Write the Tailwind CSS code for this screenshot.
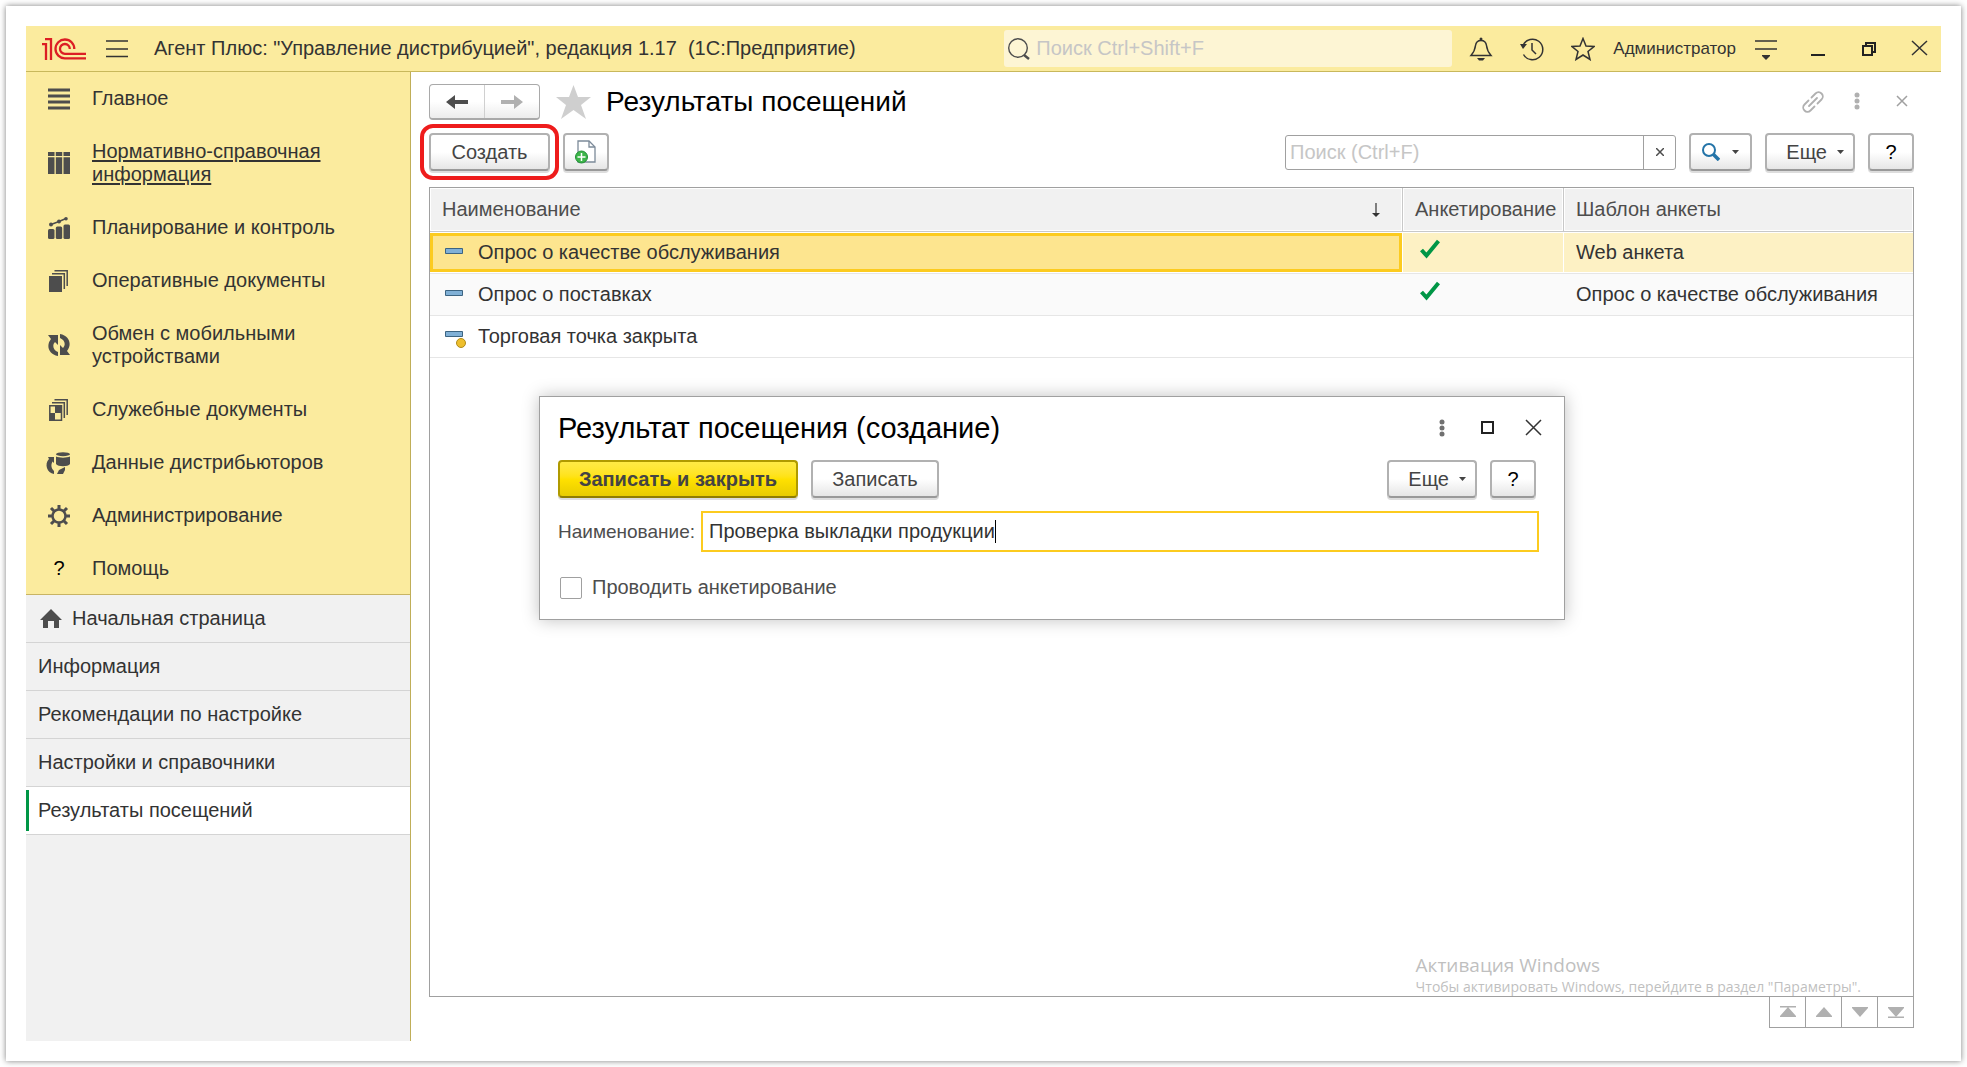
<!DOCTYPE html>
<html lang="ru">
<head>
  <meta charset="UTF-8" />
  <meta name="viewport" content="width=device-width, initial-scale=1.0"/>
  <title>Результаты посещений</title>
  <script src="https://cdn.jsdelivr.net/npm/@tailwindcss/browser@4"></script>
</head>
<body class="flex min-h-screen bg-white p-[6px] font-['Liberation_Sans',Arial,sans-serif] text-[20px] leading-[23px] text-[#333333]">

<div class="flex flex-1 flex-col bg-white p-5 shadow-[0_0_6px_rgba(0,0,0,0.5)]">

  <header class="flex h-[46px] items-center border-b border-[#c8b85c] bg-[#fbeb9e]">
    <svg class="ml-4 h-[22px] w-11 shrink-0" viewBox="0 0 44 22" fill="none" stroke="#dc1e24" stroke-width="2.300">
      <path d="M0 6.200h4V22M3 1.200h6V22"/>
      <path d="M32.300 11A9.400 9.400 0 1 0 23 20.300H44M27.800 11A4.900 4.900 0 1 0 23 15.800H44"/>
    </svg>
    <button class="ml-5 shrink-0" aria-label="Меню">
      <svg class="h-[22px] w-[22px]" viewBox="0 0 22 22" stroke="#333" stroke-width="1.500"><path d="M0 3h22M0 11h22M0 18.500h22"/></svg>
    </button>
    <h1 class="ml-[26px] flex-1 whitespace-pre">Агент Плюс: "Управление дистрибуцией", редакция 1.17  (1С:Предприятие)</h1>
    <label class="flex h-[37px] w-[448px] items-center rounded-[3px] bg-[#fdf5d4] pl-1">
      <svg class="h-[22px] w-[22px]" viewBox="0 0 22 22" fill="none" stroke="#4d4d4d"><circle cx="10" cy="10" r="9.300" stroke-width="1.400"/><path d="M16 17l5 4" stroke-width="2.500"/></svg>
      <input type="text" placeholder="Поиск Ctrl+Shift+F" aria-label="Поиск" class="ml-1.5 min-w-0 flex-1 bg-transparent outline-none placeholder:text-[#c6c6c6]">
    </label>
    <div class="ml-[7px] flex items-center gap-[7px] text-[17px]">
      <button class="flex w-11 justify-center" aria-label="Уведомления">
        <svg class="h-6 w-6" viewBox="0 0 24 24" fill="none" stroke="#333" stroke-width="1.500"><path d="M2 18.500C5 15 6 13 6.500 8.500 7 5 9 3.500 12 3.500s5 1.500 5.500 5C18 13 19 15 22 18.500Z"/><path d="M8 21h8l-2 2.500h-4z" fill="#333" stroke="none"/><circle cx="12" cy="2" r="1.500" fill="#333" stroke="none"/></svg>
      </button>
      <button class="flex w-11 justify-center" aria-label="История">
        <svg class="h-6 w-6" viewBox="0 0 24 24" fill="none" stroke="#333" stroke-width="1.500"><path d="M3.200 8A10.300 10.300 0 1 1 3.500 17.500"/><path d="M12 6v7l4 4"/><path d="M0 7h7l-4 5z" fill="#333" stroke="none"/></svg>
      </button>
      <button class="flex w-11 justify-center" aria-label="Избранное">
        <svg class="h-6 w-6" viewBox="0 0 24 24" fill="none" stroke="#333" stroke-width="1.500"><path d="M12 1.500l3 7.500 8 .5-6 5 2 8-7-4.500-7 4.500 2-8-6-5 8-.5z"/></svg>
      </button>
      <a href="#" class="px-px">Администратор</a>
      <button class="flex w-11 justify-center" aria-label="Настройки окна">
        <svg class="h-6 w-6" viewBox="0 0 24 24"><path d="M1 4h22M1 12h22" stroke="#333" stroke-width="1.500"/><path d="M8 18h8v1l-4 4-4-4z" fill="#333"/></svg>
      </button>
      <button class="flex w-11 justify-center" aria-label="Свернуть">
        <svg class="h-6 w-6" viewBox="0 0 24 24"><path d="M6 18h14" stroke="#222" stroke-width="2"/></svg>
      </button>
      <button class="flex w-11 justify-center" aria-label="Восстановить">
        <svg class="h-6 w-6" viewBox="0 0 24 24" fill="none" stroke="#222" stroke-width="2"><path d="M7 9h9v9H7zM10 9V6h9v9h-3"/></svg>
      </button>
      <button class="flex w-11 justify-center" aria-label="Закрыть">
        <svg class="h-6 w-6" viewBox="0 0 24 24" stroke="#333" stroke-width="1.500"><path d="M5 4l15 14M20 4L5 18"/></svg>
      </button>
    </div>
  </header>

  <div class="flex flex-1">

    <aside class="flex w-[385px] shrink-0 flex-col border-r border-[#c0ae58] bg-[#f1f1f1]">
      <nav class="border-b border-[#c8b464] bg-[#fbeb9e]">
        <a href="#" class="flex items-center py-[15px] pl-[22px]">
          <svg class="mr-[22px] h-[22px] w-[22px] shrink-0" viewBox="0 0 22 22"><path d="M0 2h22M0 8h22M0 14h22M0 20h22" stroke="#4d4d4d" stroke-width="3"/></svg>
          Главное
        </a>
        <a href="#" class="flex items-center py-[15px] pl-[22px] underline underline-offset-2">
          <svg class="mr-[22px] h-[22px] w-[22px] shrink-0" viewBox="0 0 22 22" fill="#4d4d4d"><path d="M0 0h6.500v4H0zM7.800 0h6.400v4H7.800zM15.500 0H22v4h-6.500zM0 5.300h6.500V22H0zM7.800 5.300h6.400V22H7.800zM15.500 5.300H22V22h-6.500z"/></svg>
          <span>Нормативно-справочная<br>информация</span>
        </a>
        <a href="#" class="flex items-center py-[15px] pl-[22px]">
          <svg class="mr-[22px] h-[22px] w-[22px] shrink-0" viewBox="0 0 22 22" fill="#4d4d4d"><rect y="12" width="6.500" height="10" rx="1.500"/><rect x="7.800" y="9.500" width="6.400" height="12.500" rx="1.500"/><rect x="15.500" y="7.500" width="6.500" height="14.500" rx="1.500"/><path d="M3 7.500l8-3 7-3" stroke="#4d4d4d" stroke-width="1.500" fill="none"/><circle cx="3" cy="7.500" r="2"/><circle cx="11" cy="4.500" r="2"/><circle cx="18" cy="1.800" r="1.800"/></svg>
          Планирование и контроль
        </a>
        <a href="#" class="flex items-center py-[15px] pl-[22px]">
          <svg class="mr-[22px] h-[22px] w-[22px] shrink-0" viewBox="0 0 22 22"><path d="M1 6h13v16H1z" fill="#4d4d4d"/><path d="M4 3.800h12.300V19M6.500.8h12.700V16" fill="none" stroke="#4d4d4d" stroke-width="1.500"/></svg>
          Оперативные документы
        </a>
        <a href="#" class="flex items-center py-[15px] pl-[22px]">
          <svg class="mr-[22px] h-[22px] w-[22px] shrink-0" viewBox="0 0 22 22" fill="#4d4d4d"><path d="M0 1h10v10L7 8c-3 3-2 8 3 10v4C0 20-2 11 3 5zM22 21H12V11l3 3c3-3 2-8-3-10V0c10 2 12 11 7 17z"/></svg>
          <span>Обмен с мобильными<br>устройствами</span>
        </a>
        <a href="#" class="flex items-center py-[15px] pl-[22px]">
          <svg class="mr-[22px] h-[22px] w-[22px] shrink-0" viewBox="0 0 22 22" fill="none" stroke="#4d4d4d" stroke-width="1.500"><path d="M1.800 6.800h11.700v14.400H1.800z"/><path d="M7 7h6v7H7zM2 14h5v7H2z" fill="#4d4d4d" stroke="none"/><path d="M4 3.800h12.300V19M6.500.8h12.700V16"/></svg>
          Служебные документы
        </a>
        <a href="#" class="flex items-center py-[15px] pl-[22px]">
          <svg class="mr-[22px] h-[22px] w-[22px] shrink-0 overflow-visible" viewBox="0 0 22 22" fill="#4d4d4d"><ellipse cx="15" cy="2.200" rx="7" ry="2"/><path d="M8 4.500c3 1.500 11 1.500 14 0V12c-2 3-12 3-14 0zM0 5h6v6L4.500 9.500c-2 4-1 7 1.500 9.500v3C-1 21-4 12 1 7zM17 15v3l-2 4H9l2-4z"/></svg>
          Данные дистрибьюторов
        </a>
        <a href="#" class="flex items-center py-[15px] pl-[22px]">
          <svg class="mr-[22px] h-[22px] w-[22px] shrink-0" viewBox="0 0 22 22" fill="none" stroke="#4d4d4d"><circle cx="11" cy="11" r="6.500" stroke-width="2.500"/><path d="M11 0v4M11 18v4M0 11h4M18 11h4M3 3l3 3M16 16l3 3M3 19l3-3M16 6l3-3" stroke-width="3"/></svg>
          Администрирование
        </a>
        <a href="#" class="flex items-center pt-[15px] pb-[14px] pl-[22px]">
          <span class="mr-[22px] w-[22px] text-center text-black">?</span>
          Помощь
        </a>
      </nav>
      <nav>
        <a href="#" class="flex h-12 items-center border-b border-[#d4d4d4] pl-[14px]">
          <svg class="mr-[10px] h-5 w-[22px]" viewBox="0 0 22 20" fill="#4d4d4d"><path d="M11 0l11 11h-3v8h-5v-7H8v7H3v-8H0z"/></svg>
          Начальная страница
        </a>
        <a href="#" class="flex h-12 items-center border-b border-[#d4d4d4] pl-3">Информация</a>
        <a href="#" class="flex h-12 items-center border-b border-[#d4d4d4] pl-3">Рекомендации по настройке</a>
        <a href="#" class="flex h-12 items-center border-b border-[#d4d4d4] pl-3">Настройки и справочники</a>
        <a href="#" class="flex h-12 items-center border-b border-[#d4d4d4] bg-white">
          <span class="mr-[9px] h-[41px] w-[3px] bg-[#009646]"></span>Результаты посещений
        </a>
      </nav>
    </aside>

    <main class="relative flex min-w-0 flex-1 flex-col pt-3 pr-[27px] pb-[13px] pl-[18px]">

      <div class="flex h-9 items-center">
        <div class="flex h-9 w-[111px] rounded-[4px] border border-b-2 border-[#a9a9a9] bg-linear-to-b from-white via-white to-[#ececec]">
          <button class="flex flex-1 items-center justify-center border-r border-[#d0d0d0]" aria-label="Назад">
            <svg class="h-4 w-[22px]" viewBox="0 0 22 16" fill="#4d4d4d"><path d="M0 8l9-7v5h13v4H9v5z"/></svg>
          </button>
          <button class="flex flex-1 items-center justify-center" aria-label="Вперед">
            <svg class="h-4 w-[22px]" viewBox="0 0 22 16" fill="#b0b0b0"><path d="M22 8l-9-7v5H0v4h13v5z"/></svg>
          </button>
        </div>
        <button class="ml-4" aria-label="В избранное">
          <svg class="h-[34px] w-[35px]" viewBox="0 0 35 34" fill="#cfcfcf"><path d="M17.500 0l4.500 12h13l-10 8 5 14-12.500-9L5 34l5-14L0 12h13z"/></svg>
        </button>
        <h2 class="ml-[15px] flex-1 text-[28px] leading-8 text-black">Результаты посещений</h2>
        <button aria-label="Ссылка">
          <svg class="h-6 w-6" viewBox="0 0 24 24" fill="none" stroke="#b0b0b0" stroke-width="1.800" stroke-linecap="round"><path d="M8 16l8-8M10.500 7.500l4-4c4-4 10 2 6 6l-4 4M13.500 16.500l-4 4c-4 4-10-2-6-6l4-4"/></svg>
        </button>
        <button class="ml-5" aria-label="Еще действия">
          <svg class="h-6 w-6" viewBox="0 0 24 24" fill="#b0b0b0"><circle cx="12" cy="5" r="2.500"/><circle cx="12" cy="11" r="2.500"/><circle cx="12" cy="17" r="2.500"/></svg>
        </button>
        <button class="ml-[21px]" aria-label="Закрыть форму">
          <svg class="h-6 w-6" viewBox="0 0 24 24" stroke="#a0a0a0" stroke-width="1.500"><path d="M7 6l10 10M17 6L7 16"/></svg>
        </button>
      </div>

      <div class="mt-[13px] flex items-center text-[#444444]">
        <button class="h-[38px] w-[121px] rounded-[4px] border-2 border-[#b1b1b1] border-b-[#999999] bg-linear-to-b from-white via-white to-[#e6e6e6] shadow-[0_2px_0_#dddddd] outline-4 outline-offset-5 outline-[#ee1c1c]">Создать</button>
        <button class="ml-[13px] flex h-[38px] w-[46px] items-center justify-center rounded-[4px] border-2 border-[#b1b1b1] border-b-[#999999] bg-linear-to-b from-white via-white to-[#e6e6e6] shadow-[0_2px_0_#dddddd]" aria-label="Создать копированием">
          <svg class="h-6 w-6" viewBox="0 0 24 24"><path d="M4 1h11l6 6v15H4z" fill="#fff" stroke="#7c8a99" stroke-width="1.300"/><path d="M15 1v6h6" fill="none" stroke="#7c8a99" stroke-width="1.300"/><circle cx="7.500" cy="17" r="6" fill="#3db54a" stroke="#1f8f35"/><path d="M7.500 13v8M3.500 17h8" stroke="#fff" stroke-width="1.500"/></svg>
        </button>
        <div class="ml-auto flex h-[35px] w-[391px] rounded-[3px] border border-[#a0a0a0] bg-white">
          <input type="text" placeholder="Поиск (Ctrl+F)" aria-label="Поиск по списку" class="min-w-0 flex-1 px-1 outline-none placeholder:text-[#c6c6c6]">
          <button class="flex w-8 items-center justify-center border-l border-[#a0a0a0]" aria-label="Очистить">
            <svg class="h-2 w-2" viewBox="0 0 8 8" stroke="#4d4d4d" stroke-width="1.500"><path d="M0 0l8 8M8 0L0 8"/></svg>
          </button>
        </div>
        <button class="ml-[13px] flex h-[38px] w-[63px] items-center justify-center gap-3 rounded-[4px] border-2 border-[#b1b1b1] border-b-[#999999] bg-linear-to-b from-white via-white to-[#e6e6e6] shadow-[0_2px_0_#dddddd]" aria-label="Найти">
          <svg class="h-[18px] w-[18px]" viewBox="0 0 18 18" fill="none" stroke="#2474a8"><circle cx="7" cy="7" r="6" stroke-width="2"/><path d="M11 11l6 6" stroke-width="3.500"/></svg>
          <svg class="h-1 w-[7px]" viewBox="0 0 7 4" fill="#444"><path d="M0 0h7L3.500 4z"/></svg>
        </button>
        <button class="ml-[13px] flex h-[38px] w-[90px] items-center justify-end gap-[10px] rounded-[4px] border-2 border-[#b1b1b1] border-b-[#999999] bg-linear-to-b from-white via-white to-[#e6e6e6] pr-[9px] shadow-[0_2px_0_#dddddd]">
          Еще
          <svg class="h-1 w-[7px]" viewBox="0 0 7 4" fill="#444"><path d="M0 0h7L3.500 4z"/></svg>
        </button>
        <button class="ml-[13px] h-[38px] w-[46px] rounded-[4px] border-2 border-[#b1b1b1] border-b-[#999999] bg-linear-to-b from-white via-white to-[#e6e6e6] text-black shadow-[0_2px_0_#dddddd]">?</button>
      </div>

      <div class="mt-4 flex-1 border border-[#a0a0a0]">
        <table class="w-full table-fixed border-separate border-spacing-0 text-left">
          <thead>
            <tr class="h-11 text-[#4d4d4d]">
              <th class="border-r border-b border-[#c8c8c8] bg-[#f1f1f1] pr-[22px] pl-3 font-normal shadow-[inset_0_0_0_1px_white]">
                <div class="flex items-center justify-between">
                  Наименование
                  <svg class="h-[14px] w-2" viewBox="0 0 8 14"><path d="M4 0v12" stroke="#333" stroke-width="1.200"/><path d="M0 10h8l-4 4z" fill="#333"/></svg>
                </div>
              </th>
              <th class="w-[161px] border-r border-b border-[#c8c8c8] bg-[#f1f1f1] pl-3 font-normal shadow-[inset_0_0_0_1px_white]">Анкетирование</th>
              <th class="w-[349px] border-b border-[#c8c8c8] bg-[#f1f1f1] pl-3 font-normal shadow-[inset_0_0_0_1px_white]">Шаблон анкеты</th>
            </tr>
          </thead>
          <tbody>
            <tr>
              <td class="border-b border-[#e6e6e6] py-px pr-px">
                <div class="flex h-[39px] items-center border-3 border-[#fccb1f] bg-[#fde58f] pl-3">
                  <svg class="mr-[15px] h-5 w-[18px]" viewBox="0 0 18 20"><path d="M.5 5.500h17v5H.5z" fill="#80b0d6" stroke="#3c6482"/></svg>
                  Опрос о качестве обслуживания
                </div>
              </td>
              <td class="border-b border-[#e6e6e6] py-px pr-px">
                <div class="flex h-[39px] bg-[#fdf1c4] pt-[6px] pl-[17px]">
                  <svg class="h-5 w-5" viewBox="0 0 20 20" fill="none" stroke="#009646" stroke-width="4"><path d="M1.500 11l5 5.500L18.500 2"/></svg>
                </div>
              </td>
              <td class="border-b border-[#e6e6e6] py-px"><div class="flex h-[39px] items-center bg-[#fdf1c4] pl-3">Web анкета</div></td>
            </tr>
            <tr class="bg-[#fafafa]">
              <td class="border-b border-[#e6e6e6] py-px">
                <div class="flex h-[39px] items-center pl-[15px]">
                  <svg class="mr-[15px] h-5 w-[18px]" viewBox="0 0 18 20"><path d="M.5 5.500h17v5H.5z" fill="#80b0d6" stroke="#3c6482"/></svg>
                  Опрос о поставках
                </div>
              </td>
              <td class="border-b border-[#e6e6e6] py-px">
                <div class="flex h-[39px] pt-[6px] pl-[17px]">
                  <svg class="h-5 w-5" viewBox="0 0 20 20" fill="none" stroke="#009646" stroke-width="4"><path d="M1.500 11l5 5.500L18.500 2"/></svg>
                </div>
              </td>
              <td class="border-b border-[#e6e6e6] py-px pl-3">Опрос о качестве обслуживания</td>
            </tr>
            <tr>
              <td class="border-b border-[#e6e6e6] py-px">
                <div class="flex h-[39px] items-center pl-[15px]">
                  <svg class="mr-3 h-[22px] w-[21px]" viewBox="0 0 21 22"><path d="M.5 5.500h17v5H.5z" fill="#80b0d6" stroke="#3c6482"/><circle cx="16" cy="17" r="4.500" fill="#eebf2d" stroke="#b08a1a"/></svg>
                  Торговая точка закрыта
                </div>
              </td>
              <td class="border-b border-[#e6e6e6]"></td>
              <td class="border-b border-[#e6e6e6]"></td>
            </tr>
          </tbody>
        </table>
      </div>

      <div class="flex h-[31px] self-end border-b border-l border-[#a0a0a0]">
        <button class="flex w-9 items-center justify-center border-r border-[#a0a0a0]" aria-label="В начало">
          <svg class="h-3 w-4" viewBox="0 0 16 12" fill="#b0b0b0"><path d="M0 0h16v1.500H0zM8 1l8 9v1H0v-1z"/></svg>
        </button>
        <button class="flex w-9 items-center justify-center border-r border-[#a0a0a0]" aria-label="Вверх">
          <svg class="h-3 w-4" viewBox="0 0 16 12" fill="#b0b0b0"><path d="M8 1l8 9v1H0v-1z"/></svg>
        </button>
        <button class="flex w-9 items-center justify-center border-r border-[#a0a0a0]" aria-label="Вниз">
          <svg class="h-3 w-4" viewBox="0 0 16 12" fill="#b0b0b0"><path d="M8 11l8-9V1H0v1z"/></svg>
        </button>
        <button class="flex w-9 items-center justify-center border-r border-[#a0a0a0]" aria-label="В конец">
          <svg class="h-3 w-4" viewBox="0 0 16 12" fill="#b0b0b0"><path d="M0 10.500h16V12H0zM8 11l8-9V1H0v1z"/></svg>
        </button>
      </div>

      <!-- водяной знак активации -->
      <div class="absolute right-20 bottom-11 font-['Open_Sans','Noto_Sans',sans-serif] text-[#bfbfbf]">
        <p class="text-[19px] leading-6">Активация Windows</p>
        <p class="text-[14px] leading-5">Чтобы активировать Windows, перейдите в раздел "Параметры".</p>
      </div>

      <!-- окно создания -->
      <section class="absolute top-[324px] left-32 h-[224px] w-[1026px] border border-[#a0a0a0] bg-white px-[18px] shadow-[0_0_16px_rgba(0,0,0,0.25)]" role="dialog" aria-labelledby="dialog-title">
        <div class="mt-[15px] flex h-8 items-center">
          <h2 id="dialog-title" class="flex-1 text-[29px] leading-8 text-black">Результат посещения (создание)</h2>
          <button aria-label="Еще действия">
            <svg class="h-6 w-6" viewBox="0 0 24 24" fill="#707070"><circle cx="12" cy="6" r="2.500"/><circle cx="12" cy="12" r="2.500"/><circle cx="12" cy="18" r="2.500"/></svg>
          </button>
          <button class="ml-[22px]" aria-label="Развернуть">
            <svg class="h-6 w-6" viewBox="0 0 24 24" fill="none" stroke="#222" stroke-width="2"><path d="M6 6h11v11H6z"/></svg>
          </button>
          <button class="ml-[22px]" aria-label="Закрыть">
            <svg class="h-6 w-6" viewBox="0 0 24 24" stroke="#333" stroke-width="1.500"><path d="M4 4l15 15M19 4L4 19"/></svg>
          </button>
        </div>
        <div class="mt-4 flex items-center pr-[10px] text-[#444444]">
          <button class="h-[38px] w-60 rounded-[4px] border-2 border-[#b09a00] border-b-[#8f7d00] bg-linear-to-b from-[#ffea45] via-[#ffe100] to-[#e8cc00] font-bold shadow-[0_2px_0_#dddddd]">Записать и закрыть</button>
          <button class="ml-[13px] h-[38px] w-32 rounded-[4px] border-2 border-[#b1b1b1] border-b-[#999999] bg-linear-to-b from-white via-white to-[#e6e6e6] shadow-[0_2px_0_#dddddd]">Записать</button>
          <button class="ml-auto flex h-[38px] w-[90px] items-center justify-end gap-[10px] rounded-[4px] border-2 border-[#b1b1b1] border-b-[#999999] bg-linear-to-b from-white via-white to-[#e6e6e6] pr-[9px] shadow-[0_2px_0_#dddddd]">
            Еще
            <svg class="h-1 w-[7px]" viewBox="0 0 7 4" fill="#444"><path d="M0 0h7L3.500 4z"/></svg>
          </button>
          <button class="ml-[13px] h-[38px] w-[46px] rounded-[4px] border-2 border-[#b1b1b1] border-b-[#999999] bg-linear-to-b from-white via-white to-[#e6e6e6] text-black shadow-[0_2px_0_#dddddd]">?</button>
        </div>
        <div class="mt-[13px] flex items-center pr-[7px]">
          <label for="name" class="w-[143px] text-[19px] text-[#4d4d4d]">Наименование:</label>
          <div class="flex h-[41px] flex-1 items-center border-2 border-[#fccb1f] pl-[6px]">
            <input id="name" type="text" value="Проверка выкладки продукции" class="field-sizing-content outline-none">
            <span class="h-[23px] w-px bg-black"></span>
          </div>
        </div>
        <label class="mt-6 flex items-center gap-[10px] pl-[2px] text-[#4d4d4d]">
          <input type="checkbox" class="h-[22px] w-[22px] appearance-none rounded-[2px] border border-[#a0a0a0] bg-white">
          Проводить анкетирование
        </label>
      </section>
    </main>
  </div>
</div>

</body>
</html>
